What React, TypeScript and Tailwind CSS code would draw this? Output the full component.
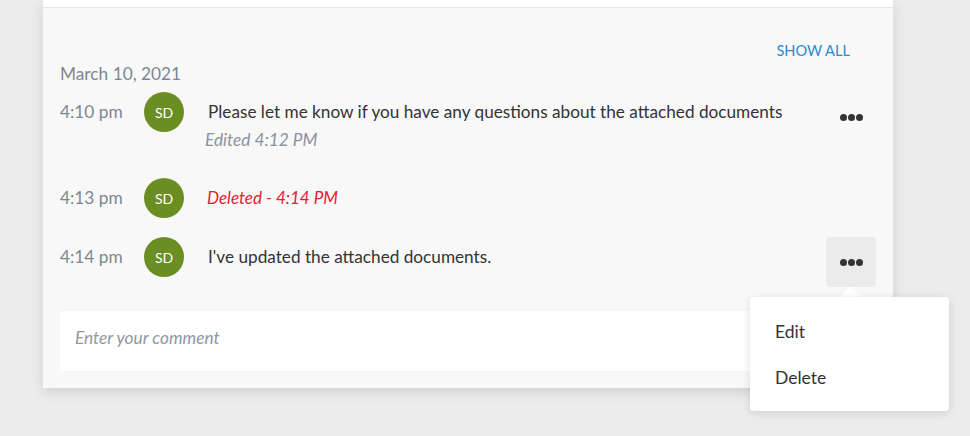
import React from "react";

const Dots = () => (
  <div className="flex items-center gap-[1px]">
    <span className="w-[7px] h-[7px] rounded-full bg-[#333333]" />
    <span className="w-[7px] h-[7px] rounded-full bg-[#333333]" />
    <span className="w-[7px] h-[7px] rounded-full bg-[#333333]" />
  </div>
);

const Avatar = () => (
  <div className="w-[40px] h-[40px] rounded-full bg-[#6b8e23] flex items-center justify-center text-white text-[14px] shrink-0">
    SD
  </div>
);

export default function App() {
  return (
    <div
      className="relative w-[970px] h-[436px] bg-[#ececec] overflow-hidden"
      style={{ fontFamily: "Lato, 'Open Sans', sans-serif" }}
    >
      <div className="ml-[43px] w-[850px] shadow-[0_4px_12px_rgba(0,0,0,0.12)]">
        <div className="h-[8px] bg-white border-b border-[#e6e6e6]" />
        <div className="bg-[#f8f8f8] px-[17px] pt-[33px] pb-[17px]">
          <div className="flex justify-end pr-[26px] h-[20px] items-center">
            <span className="text-[14.6px] text-[#2a8ad0]">SHOW ALL</span>
          </div>
          <div className="mt-[1px] h-[24px] flex items-center text-[17.3px] text-[#7d8793]">
            March 10, 2021
          </div>

          <div className="mt-[6px] flex">
            <div className="w-[84px] h-[40px] flex items-center text-[17.3px] text-[#7d8793]">4:10 pm</div>
            <Avatar />
            <div className="flex-1 pl-[24px] pt-[8px]">
              <div className="text-[17.2px] leading-[24px] text-[#333333]">
                Please let me know if you have any questions about the attached documents
              </div>
              <div className="mt-[4px] -ml-[3px] text-[17.3px] leading-[24px] italic text-[#8a929c]">
                Edited 4:12 PM
              </div>
            </div>
            <div className="w-[50px] h-[50px] flex items-center justify-center rounded-[4px]">
              <Dots />
            </div>
          </div>

          <div className="mt-[26px] flex">
            <div className="w-[84px] h-[40px] flex items-center text-[17.3px] text-[#7d8793]">4:13 pm</div>
            <Avatar />
            <div className="flex-1 pl-[23px] h-[40px] flex items-center">
              <span className="text-[17px] italic text-[#e3212d]">Deleted - 4:14 PM</span>
            </div>
          </div>

          <div className="mt-[19px] flex">
            <div className="w-[84px] h-[40px] flex items-center text-[17.3px] text-[#7d8793]">4:14 pm</div>
            <Avatar />
            <div className="flex-1 pl-[24px] h-[40px] flex items-center">
              <span className="text-[17.2px] text-[#333333]">I've updated the attached documents.</span>
            </div>
            <div className="w-[50px] h-[50px] flex items-center justify-center rounded-[4px] bg-[#ebebeb]">
              <Dots />
            </div>
          </div>

          <div className="mt-[24px] h-[60px] bg-white flex items-center px-[15px] pb-[6px]">
            <span className="text-[17.3px] italic text-[#9097a0]">Enter your comment</span>
          </div>
        </div>
      </div>

      <div className="absolute left-[840px] top-[287px] w-0 h-0 border-x-[10px] border-x-transparent border-b-[10px] border-b-white" />
      <div className="absolute left-[750px] top-[297px] w-[199px] h-[114px] bg-white rounded-[4px] shadow-[0_2px_10px_rgba(0,0,0,0.12)] pl-[25px] pt-[23px]">
        <div className="h-[24px] flex items-center text-[17.5px] text-[#333333]">Edit</div>
        <div className="mt-[22px] h-[24px] flex items-center text-[17.5px] text-[#333333]">Delete</div>
      </div>
    </div>
  );
}
